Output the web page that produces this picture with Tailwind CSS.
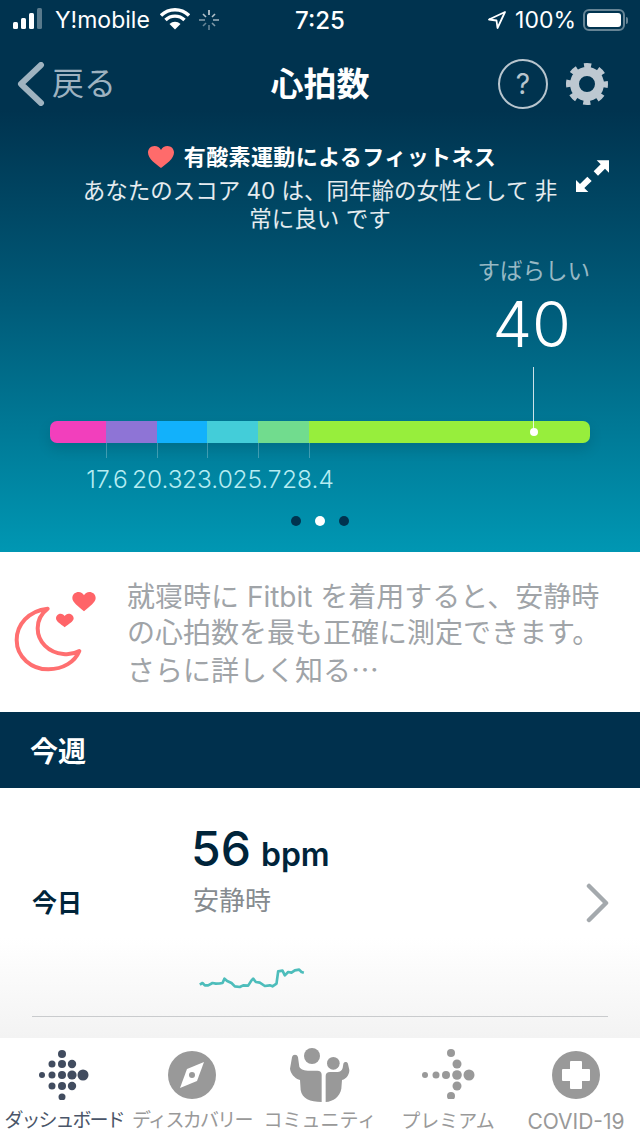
<!DOCTYPE html>
<html lang="ja">
<head>
  <meta charset="UTF-8" />
  <meta name="viewport" content="width=device-width, initial-scale=1.0"/>
  <title>心拍数</title>
  <script src="https://cdn.jsdelivr.net/npm/@tailwindcss/browser@4"></script>
</head>
<body class="overflow-hidden bg-white font-['Inter','Noto_Sans_CJK_JP',sans-serif]">
  <div class="w-[640px] h-[1136px] flex flex-col overflow-hidden">

    <!-- Hero -->
    <div class="h-[552px] shrink-0 flex flex-col bg-[linear-gradient(180deg,#00334f_0px,#00334f_110px,#005a78_300px,#0097b3_552px)] text-white">
      <!-- Status bar -->
      <div class="h-[40px] flex items-center relative text-[23px] leading-none">
        <div class="flex items-center pl-[13px]">
          <svg width="33" height="22" viewBox="0 0 33 22" class="mt-[-2px]">
            <rect x="0" y="14" width="5" height="7" rx="1.5" fill="#fff"/>
            <rect x="8" y="10" width="5" height="11" rx="1.5" fill="#fff"/>
            <rect x="16" y="5" width="5" height="16" rx="1.5" fill="#fff"/>
            <rect x="24" y="0" width="5" height="21" rx="1.5" fill="#fff" fill-opacity="0.35"/>
          </svg>
          <span class="ml-[9px]">Y!mobile</span>
          <svg width="30" height="22" viewBox="0 0 30 22" class="ml-[10px] mt-[-2px]">
            <path d="M1 7.500a20 20 0 0 1 28 0M5.500 12a13.500 13.500 0 0 1 19 0" fill="none" stroke="#fff" stroke-width="3.400"/>
            <path d="M9.500 16a8 8 0 0 1 11 0L15 21.500z" fill="#fff"/>
          </svg>
          <svg width="22" height="22" viewBox="0 0 22 22" class="ml-[8px]" stroke="#fff" stroke-width="1.600">
            <path d="M11 1v5" stroke-opacity=".8"/><path d="M17 5l-3 3" stroke-opacity=".7"/><path d="M21 11h-6" stroke-opacity=".6"/><path d="M17 17l-3-3" stroke-opacity=".5"/><path d="M11 21v-5" stroke-opacity=".4"/><path d="M5 17l3-3" stroke-opacity=".4"/><path d="M1 11h6" stroke-opacity=".5"/><path d="M5 5l3 3" stroke-opacity=".7"/>
          </svg>
        </div>
        <span class="absolute left-[295px] top-[9px] text-[24px] font-medium">7:25</span>
        <div class="ml-auto flex items-center pr-[12px]">
          <svg width="20" height="20" viewBox="0 0 20 20" class="mr-[8px]">
            <path d="M18 2 2 9.500l7.500 1 1 7.500z" fill="none" stroke="#fff" stroke-width="1.800" stroke-linejoin="round"/>
          </svg>
          <span class="mr-[7px]">100%</span>
          <div class="w-[42px] h-[22px] rounded-[6px] border-2 border-white/40 p-[2px]">
            <div class="w-full h-full bg-white rounded-[3px]"></div>
          </div>
          <div class="w-[2px] h-[7px] bg-white/40 rounded-r-sm ml-[1px]"></div>
        </div>
      </div>

      <!-- Nav bar -->
      <div class="h-[88px] flex items-center relative">
        <div class="flex items-center pl-[17px]">
          <svg width="28" height="44" viewBox="0 0 28 44">
            <path d="M24 3 4 22l20 19" fill="none" stroke="#9fb3c0" stroke-width="6" stroke-linecap="round" stroke-linejoin="round"/>
          </svg>
          <span class="text-[32px] leading-none ml-[7px] text-[#9db2c0]">戻る</span>
        </div>
        <span class="absolute left-0 right-0 text-center text-[33px] font-bold leading-none">心拍数</span>
        <div class="ml-auto flex items-center pr-[32px] gap-[18px]">
          <div class="w-[50px] h-[50px] rounded-full border-2 border-[#b7c5ce] flex items-center justify-center text-[#b7c5ce] text-[28px] leading-none">?</div>
          <svg width="42" height="42" viewBox="0 0 42 42" fill="none" stroke="#bdc8d1">
            <circle cx="21" cy="21" r="12.500" stroke-width="9"/>
            <circle cx="21" cy="21" r="17.500" stroke-width="7" stroke-dasharray="6.800 6.950" stroke-dashoffset="3.400"/>
          </svg>
        </div>
      </div>

      <!-- Card heading -->
      <div class="relative mt-[14px] h-[78px] px-[80px] text-center whitespace-nowrap">
        <div class="flex items-center justify-center text-[22px] tracking-[0.4px] font-bold leading-[30px] h-[30px] pl-[4px]">
          <svg width="26" height="22" viewBox="0 0 26 22" class="mr-[10px]">
            <path fill="#ff6b6b" d="M13 22C8 18 0 13 0 6.500 0 2.800 3 0 6.500 0 9.300 0 11.800 1.600 13 4 14.200 1.600 16.700 0 19.500 0 23 0 26 2.800 26 6.500 26 13 18 18 13 22z"/>
          </svg>
          <span>有酸素運動によるフィットネス</span>
        </div>
        <p class="text-[22.500px] leading-[28px] text-white/90 mt-[5px]">あなたのスコア 40 は、同年齢の女性として 非<br>常に良い です</p>
        <svg width="46" height="48" viewBox="0 0 138 144" class="absolute left-[570px] top-[10px]">
          <path fill="#fff" d="M117 25V62L105 50 84 71 71 58 92 37 80 25Z"/>
          <path fill="#fff" d="M18 120V84L30 96 52 74 65 87 43 108 55 120Z"/>
        </svg>
      </div>

      <!-- Score -->
      <div class="flex flex-col items-end pr-[50px] mt-[37px]">
        <span class="text-[22.500px] leading-[28px] text-white/60">すばらしい</span>
        <span class="text-[63px] leading-[74px] font-light pr-[19px] mt-[2px]">40</span>
      </div>

      <!-- Scale bar -->
      <div class="relative mx-[50px] mt-[60px] h-[22px] rounded-[7px] flex shadow-[0_6px_14px_rgba(0,0,0,0.12)]">
        <div class="w-[56px] bg-[#f23fbc] rounded-l-[7px]"></div>
        <div class="w-[51px] bg-[#8e74d6]"></div>
        <div class="w-[50px] bg-[#12b1fb]"></div>
        <div class="w-[51px] bg-[#43cdd9]"></div>
        <div class="w-[51px] bg-[#71dc8e]"></div>
        <div class="flex-1 bg-[#97ee3c] rounded-r-[7px]"></div>
        <div class="absolute left-[483px] top-[-54px] w-px h-[64px] bg-white/80"></div>
        <div class="absolute left-[480px] top-[7px] w-[8px] h-[8px] rounded-full bg-white"></div>
        <div class="absolute left-[56px] top-[22px] w-px h-[15px] bg-white/25"></div>
        <div class="absolute left-[107px] top-[22px] w-px h-[15px] bg-white/25"></div>
        <div class="absolute left-[157px] top-[22px] w-px h-[15px] bg-white/25"></div>
        <div class="absolute left-[208px] top-[22px] w-px h-[15px] bg-white/25"></div>
        <div class="absolute left-[259px] top-[22px] w-px h-[15px] bg-white/25"></div>
      </div>
      <div class="flex pl-[82px] mt-[21px] text-[24.500px] leading-[30px] text-[#b5ecf2] font-light whitespace-nowrap">
        <span class="w-[50px] text-center">17.6</span><span class="w-[50px] text-center">20.3</span><span class="w-[50px] text-center">23.0</span><span class="w-[50px] text-center">25.7</span><span class="w-[50px] text-center">28.4</span>
      </div>

      <!-- Pager -->
      <div class="flex justify-center gap-[14px] mt-[22px]">
        <div class="w-[10px] h-[10px] rounded-full bg-[#00334f]"></div>
        <div class="w-[10px] h-[10px] rounded-full bg-white"></div>
        <div class="w-[10px] h-[10px] rounded-full bg-[#00334f]"></div>
      </div>
    </div>

    <!-- Sleep tip -->
    <div class="h-[160px] shrink-0 flex items-center bg-white">
      <svg width="130" height="110" viewBox="0 0 390 330" class="shrink-0 mt-[-14px]">
        <path d="M143 116C85 122 50 165 50 210 50 262 95 298 145 298 190 298 225 275 238 243 225 250 205 254 190 252 145 248 113 215 113 175 113 150 125 130 143 116Z" fill="none" stroke="#ff6f70" stroke-width="12" stroke-linejoin="round"/>
        <path fill="#ff6468" d="M252 124C235 108 217 98 217 84 217 73 226 66 236 66 243 66 249 70 252 76 255 70 261 66 268 66 278 66 287 73 287 84 287 98 269 108 252 124Z"/>
        <path fill="#ff6468" d="M194 172C182 162 168 155 168 145 168 137 175 131 182 131 187 131 192 134 194 138 196 134 201 131 206 131 213 131 221 137 221 145 221 155 206 162 194 172Z"/>
      </svg>
      <p class="ml-[-3px] pt-[3px] text-[28px] leading-[36px] text-[#a0a4a8] whitespace-nowrap">就寝時に Fitbit を着用すると、安静時<br>の心拍数を最も正確に測定できます。<br>さらに詳しく知る<span class="font-['Noto_Sans_CJK_JP']">…</span></p>
    </div>

    <!-- Section header -->
    <div class="h-[76px] shrink-0 flex items-center bg-[#00304d] px-[30px] pt-[3px] text-white text-[28px] font-bold">今週</div>

    <!-- Today row -->
    <div class="flex-1 relative bg-[linear-gradient(180deg,#ffffff_0px,#ffffff_150px,#f3f3f3_250px)]">
      <div class="mx-[32px] h-[229px] border-b border-[#c9cbcd] flex">
        <span class="w-[161px] mt-[100px] text-[25px] leading-[30px] font-bold text-[#00243a]">今日</span>
        <div class="flex flex-col">
          <div class="flex items-baseline text-[#00243a] mt-[29px] h-[64px] ml-[-2px]">
            <span class="text-[48px] leading-[64px] font-medium">56</span>
            <span class="text-[32px] font-semibold ml-[10px]">bpm</span>
          </div>
          <span class="text-[26px] leading-[30px] text-[#868b8f] mt-[5px]">安静時</span>
          <svg width="107" height="30" viewBox="55 55 320 90" class="mt-[51px] ml-[5px]">
            <path d="M60 108 68 103 75 110 85 110 98 103 108 105 120 104 128 103 134 90 142 97 155 103 165 113 180 115 190 110 205 111 215 95 220 90 228 100 240 102 255 112 270 110 278 113 290 105 295 68 308 66 315 80 325 70 335 72 345 65 358 63 365 70 372 72" fill="none" stroke="#4dbdbb" stroke-width="8" stroke-linejoin="round"/>
          </svg>
        </div>
        <svg width="24" height="40" viewBox="0 0 24 40" class="absolute left-[586px] top-[95px]">
          <path d="M3 3l17 17L3 37" fill="none" stroke="#a4a9ad" stroke-width="4.500" stroke-linecap="round" stroke-linejoin="round"/>
        </svg>
      </div>
    </div>

    <!-- Tab bar -->
    <div class="h-[98px] shrink-0 bg-white flex text-[19px] leading-none text-[#999]">
      <div class="w-[128px] flex flex-col items-center text-[#4a5568]">
        <svg width="50" height="50" viewBox="0 0 50 50" class="mt-[12px]" fill="#414c5f">
          <circle cx="23" cy="4" r="4"/>
          <circle cx="13" cy="14" r="3.500"/><circle cx="23" cy="14" r="4"/><circle cx="33" cy="14" r="4.200"/>
          <circle cx="3" cy="25" r="3"/><circle cx="13" cy="25" r="3.500"/><circle cx="23" cy="25" r="4"/><circle cx="33" cy="25" r="4.600"/><circle cx="44" cy="25" r="5.500"/>
          <circle cx="13" cy="36" r="3.500"/><circle cx="23" cy="36" r="4"/><circle cx="33" cy="36" r="4.200"/>
          <circle cx="23" cy="47" r="3.500"/>
        </svg>
        <span class="mt-[11px] whitespace-nowrap tracking-[-2px]">ダッシュボード</span>
      </div>
      <div class="w-[128px] flex flex-col items-center">
        <svg width="48" height="48" viewBox="0 0 48 48" class="mt-[13px]">
          <circle cx="24" cy="24" r="24" fill="#999"/>
          <path d="M36 11 29 30 12 37l7-19z" fill="#fff"/>
          <circle cx="24" cy="24" r="3" fill="#999"/>
        </svg>
        <span class="mt-[12px] whitespace-nowrap tracking-[-1.700px]">ディスカバリー</span>
      </div>
      <div class="w-[128px] flex flex-col items-center">
        <svg width="80" height="70" viewBox="0 0 240 210" class="mt-[2px]" fill="#999">
          <circle cx="96" cy="48" r="24"/>
          <circle cx="160" cy="70" r="19"/>
          <path d="M36 52C38 42 52 42 54 52L58 80C62 88 72 92 90 92L112 92C120 92 125 96 125 104L125 186C90 186 66 176 62 150L60 120C42 114 32 100 30 86Z"/>
          <path d="M137 186 137 108C137 100 142 96 150 96L172 96C180 96 186 92 188 84L190 72C192 64 202 64 204 72L208 90C208 104 200 116 186 120L184 146C180 170 160 184 137 186Z"/>
        </svg>
        <span class="mt-[1px] whitespace-nowrap">コミュニティ</span>
      </div>
      <div class="w-[128px] flex flex-col items-center">
        <svg width="54" height="50" viewBox="0 0 54 50" class="mt-[11px]" fill="#999">
          <circle cx="30" cy="4" r="4"/>
          <circle cx="36" cy="15" r="4.500"/>
          <circle cx="4" cy="26" r="3"/><circle cx="15" cy="26" r="3.500"/><circle cx="25" cy="26" r="4"/><circle cx="36" cy="26" r="4.800"/><circle cx="48" cy="26" r="5.500"/>
          <circle cx="36" cy="37" r="4.500"/>
          <circle cx="30" cy="47" r="4"/>
        </svg>
        <span class="mt-[13px] whitespace-nowrap">プレミアム</span>
      </div>
      <div class="w-[128px] flex flex-col items-center">
        <svg width="48" height="48" viewBox="0 0 48 48" class="mt-[13px]">
          <circle cx="24" cy="24" r="24" fill="#999"/>
          <path d="M19 10h10a1 1 0 0 1 1 1v7h7a1 1 0 0 1 1 1v10a1 1 0 0 1-1 1h-7v7a1 1 0 0 1-1 1H19a1 1 0 0 1-1-1v-7h-7a1 1 0 0 1-1-1V19a1 1 0 0 1 1-1h7v-7a1 1 0 0 1 1-1z" fill="#fff"/>
        </svg>
        <span class="mt-[12px] whitespace-nowrap text-[21px]">COVID-19</span>
      </div>
    </div>
  </div>
</body>
</html>
